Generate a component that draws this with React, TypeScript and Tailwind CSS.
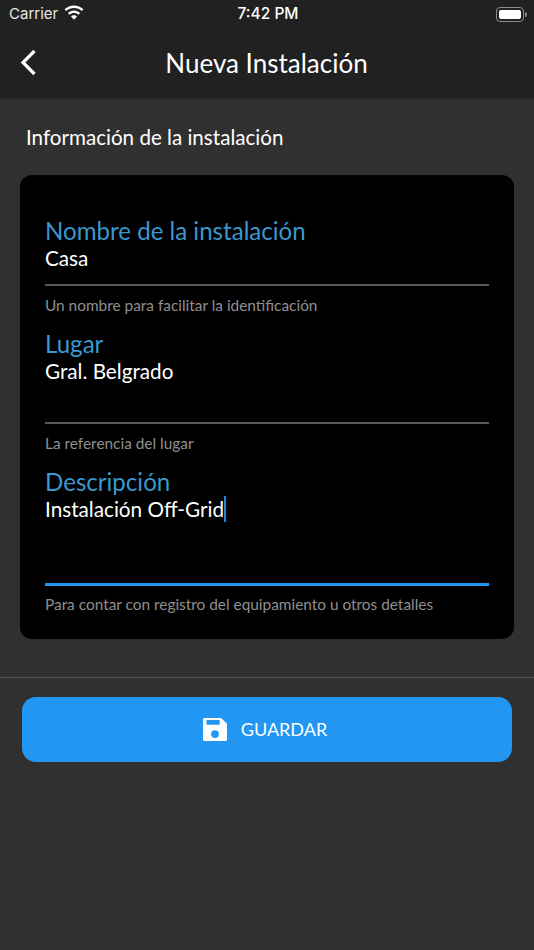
const lato = "font-['Lato','Noto_Sans',sans-serif]";

function WifiIcon() {
  return (
    <svg className="-mt-[3px]" width="20" height="15" viewBox="1 0.300 18 13.500" fill="#fff">
      <path d="M10 2.900c2.700 0 5.200 1 7.100 2.800l1.400-1.500C16.200 2 13.200.700 10 .700S3.800 2 1.500 4.200l1.400 1.500C4.800 3.900 7.300 2.900 10 2.900z" />
      <path d="M10 7.400c1.500 0 2.900.600 4 1.600l1.500-1.500C14 6 12.100 5.200 10 5.200S6 6 4.500 7.500L6 9c1.100-1 2.500-1.600 4-1.600z" />
      <path d="M10 9.600c-1 0-2 .400-2.700 1.100L10 13.600l2.700-2.900c-.700-.700-1.700-1.100-2.700-1.100z" />
    </svg>
  );
}

function SaveIcon() {
  return (
    <svg width="24" height="23" viewBox="0 0 24 23" fill="#fff">
      <path
        fillRule="evenodd"
        d="M1.500 0h16.500l6 5.500v16c0 .800-.700 1.500-1.500 1.500H1.500C.700 23 0 22.300 0 21.500v-20C0 .700.700 0 1.500 0zm2 2v4.800h13.200V2H3.500zM12 12.200a3.900 3.900 0 1 0 0 7.800 3.900 3.900 0 0 0 0-7.800z"
      />
    </svg>
  );
}

type FieldProps = {
  label: string;
  value: string;
  help: string;
  spacer: string;
  focused?: boolean;
};

function Field({ label, value, help, spacer, focused }: FieldProps) {
  return (
    <div>
      <div className="text-[24.100px] leading-[28px] text-[#3a97cf]">{label}</div>
      <div className={`flex items-center text-[20.700px] leading-[26px] text-white ${spacer}`}>
        <span>{value}</span>
        {focused && <span className="h-[26px] w-[2px] bg-[#1e88d8]" />}
      </div>
      <div className={focused ? "h-[3px] bg-[#2196f3]" : "h-[2px] bg-[#5a5a5a]"} />
      <div className={`${focused ? "mt-[8px]" : "mt-[9px]"} text-[15.400px] leading-[20px] text-[#8f8f8f]`}>{help}</div>
    </div>
  );
}

export default function App() {
  return (
    <div className={`${lato} flex min-h-[950px] w-[534px] flex-col bg-[#303030]`}>
      <header className="h-[98px] bg-[#212121] shadow-[0_1px_2px_rgba(0,0,0,0.2)]">
        <div className="flex h-[28px] items-center justify-between pl-[9px] pr-[7px] font-['Inter',sans-serif] text-white">
          <div className="flex w-[120px] items-center gap-[6px] text-[15px] text-[#e8e8e8]">
            Carrier
            <WifiIcon />
          </div>
          <div className="text-[15.500px] font-medium">7:42 PM</div>
          <div className="flex w-[120px] justify-end">
            <div className="flex items-center gap-px">
              <div className="h-[15px] w-[28px] rounded-[4px] border border-[#8a8a8a] p-[2px]">
                <div className="h-full w-full rounded-[2px] bg-white" />
              </div>
              <div className="h-[5px] w-[2px] rounded-r-sm bg-[#8a8a8a]" />
            </div>
          </div>
        </div>
        <div className="relative flex h-[70px] items-center justify-center">
          <svg className="absolute left-[20px] top-[21px]" width="17" height="27" viewBox="0 0 17 27" fill="none">
            <path d="M14.500 2 3 13.500 14.500 25" stroke="#fff" strokeWidth="3.200" />
          </svg>
          <h1 className="-ml-px text-[26px] font-normal text-white">Nueva Instalación</h1>
        </div>
      </header>

      <main>
        <h2 className="pl-[26px] pt-[25px] text-[20.600px] leading-[28px] text-white">Información de la instalación</h2>
        <div className="mx-[20px] mt-[24px] flex h-[464px] flex-col gap-[15px] rounded-[12px] bg-black px-[25px] pt-[42px]">
          <Field label="Nombre de la instalación" value="Casa" help="Un nombre para facilitar la identificación" spacer="pb-[13px]" />
          <Field label="Lugar" value="Gral. Belgrado" help="La referencia del lugar" spacer="pb-[38px]" />
          <Field label="Descripción" value="Instalación Off-Grid" help="Para contar con registro del equipamiento u otros detalles" spacer="pb-[61px]" focused />
        </div>
        <div className="mt-[38px] h-px bg-[#44555f]" />
        <div className="px-[22px] pt-[19px]">
          <button className="flex h-[65px] w-full items-center justify-center gap-[14px] rounded-[14px] bg-[#2196f3] pr-[4px] text-[18px] text-white">
            <SaveIcon />
            GUARDAR
          </button>
        </div>
      </main>
    </div>
  );
}
